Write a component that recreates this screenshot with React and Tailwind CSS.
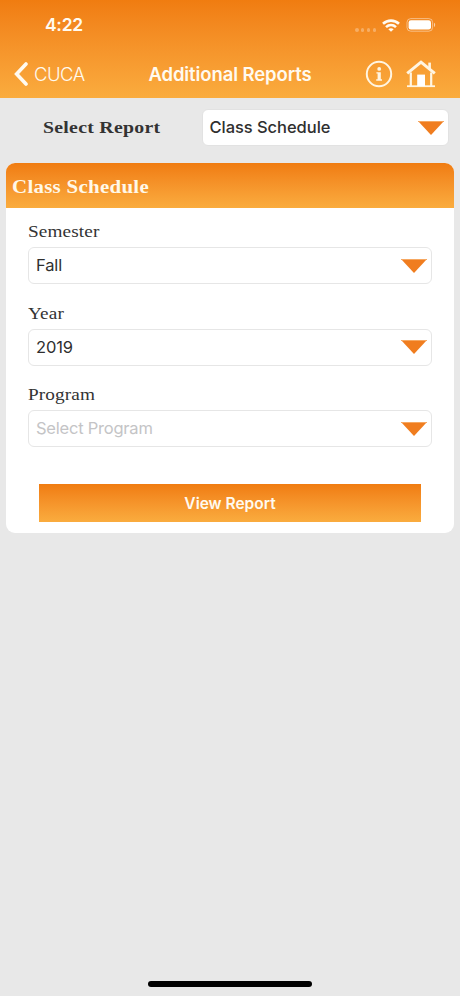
import { useState } from "react";

const fields = [
  { name: "semester", label: "Semester", value: "Fall" },
  { name: "year", label: "Year", value: "2019" },
  { name: "program", label: "Program", value: "", placeholder: "Select Program" },
];

function Caret() {
  return (
    <svg width="26" height="14" viewBox="0 0 26 14" className="shrink-0">
      <path d="M0 0H26L13 14Z" fill="#f07d1f" />
      <path d="M0 .5H26" stroke="#f6a862" />
    </svg>
  );
}

function StatusBar() {
  return (
    <div className="flex h-[50px] items-center justify-between pl-[45px] pr-[24px]">
      <span className="text-[17.5px] leading-none font-semibold tracking-[-0.3px]">4:22</span>
      <div className="flex items-center">
        <div className="mt-[10px] mr-[6px] flex gap-[2.4px]">
          {[0, 1, 2, 3].map((n) => (
            <span key={n} className="size-[3.4px] rounded-full bg-white/30" />
          ))}
        </div>
        <svg width="18" height="13" viewBox="0 0 18 13" fill="none" stroke="#fffaf0" strokeWidth="2.6">
          <path d="M1 4.8C5.4.6 12.6.6 17 4.8" />
          <path d="M4 8.1C6.9 5.5 11.1 5.5 14 8.1" />
          <path d="M9 12.8L6.3 10.2C7.9 8.9 10.1 8.9 11.7 10.2Z" fill="#fffaf0" stroke="none" />
        </svg>
        <svg width="30" height="14" viewBox="0 0 30 14" className="ml-[6px]">
          <rect x="1" y=".6" width="25.6" height="12.6" rx="3.8" fill="none" stroke="#fff" strokeOpacity=".45" />
          <rect x="2.6" y="2.2" width="22.4" height="9.4" rx="2.4" fill="#fff" />
          <path d="M28 4.8C29.6 5.4 29.6 8.4 28 9Z" fill="#fff" fillOpacity=".6" />
        </svg>
      </div>
    </div>
  );
}

function NavBar() {
  return (
    <div className="grid h-12 grid-cols-[1fr_auto_1fr] items-center px-[14px]">
      <button className="flex items-center gap-[6px]">
        <svg width="14" height="24" viewBox="0 0 14 24" fill="none" stroke="#fffaf0" strokeWidth="3.6" strokeLinecap="round">
          <path d="M12 2L2.6 12L12 22" strokeLinejoin="miter" />
        </svg>
        <span className="text-[18.5px] leading-none font-light tracking-[-0.5px]">CUCA</span>
      </button>
      <h1 className="text-[18.5px] leading-none font-semibold tracking-[-0.1px]">Additional Reports</h1>
      <div className="mr-[10px] flex items-center justify-end gap-[13px]">
        <svg width="28" height="28" viewBox="0 0 28 28" fill="none" stroke="#fff5e2">
          <circle cx="14" cy="14" r="12.2" strokeWidth="2" />
          <circle cx="14.2" cy="8.9" r="1.9" fill="#fff5e2" stroke="none" />
          <path d="M11.4 12.2H15.8V19.2H17V20.8H11.2V19.2H12.6V13.6H11.4Z" fill="#fff5e2" stroke="none" />
        </svg>
        <svg width="30" height="28" viewBox="0 0 30 28" fill="none" stroke="#fff5e2">
          <path d="M1.2 13.4L15 2.2L28.8 13.4" strokeWidth="3" />
          <path d="M23.6 2.6V9.4" strokeWidth="2.6" />
          <path d="M4.8 12.6V26M25.2 12.6V26" strokeWidth="2.2" />
          <path d="M1 26.2H29" strokeWidth="1.8" />
          <path d="M11.2 14.6H19V26H11.2Z" fill="#fff" stroke="none" />
        </svg>
      </div>
    </div>
  );
}

function SelectField({ label, value, placeholder }) {
  return (
    <div>
      <label className="block h-5 origin-left scale-x-[1.1] font-['Liberation_Serif',serif] text-[17.5px] leading-5 tracking-[0.1px] text-[#333]">
        {label}
      </label>
      <button className="mt-[6px] flex h-[37px] w-full items-center justify-between rounded-[6px] border border-[#e6e6e6] bg-white pr-1 pl-[7px] text-[16.5px]">
        {value ? (
          <span className="tracking-[-0.15px] text-[#2f2f2f]">{value}</span>
        ) : (
          <span className="tracking-[-0.22px] text-[#c4c4c6]">{placeholder}</span>
        )}
        <Caret />
      </button>
    </div>
  );
}

function App() {
  const [report] = useState("Class Schedule");

  return (
    <div className="flex h-[996px] w-[460px] flex-col bg-[#e8e8e8] font-['Inter',sans-serif]">
      <header className="h-[98px] shrink-0 bg-linear-to-b from-[#f07c10] to-[#faac3e] text-[#fffaf0]">
        <StatusBar />
        <NavBar />
      </header>

      {/* Report picker */}
      <div className="mt-[11px] flex h-[37px] items-center pr-[11px] pl-[43px]">
        <div className="w-[158.5px] shrink-0 pb-[2px]">
          <span className="inline-block origin-left scale-x-[1.13] font-['Liberation_Serif',serif] text-[17.5px] leading-none font-bold tracking-[0.25px] whitespace-nowrap text-[#333]">
            Select Report
          </span>
        </div>
        <button className="flex h-[37px] flex-1 items-center justify-between rounded-[6px] border border-[#e2e2e2] bg-white pr-1 pl-[7px] text-[16.5px] font-medium tracking-[-0.05px] text-[#2f2f2f]">
          {report}
          <Caret />
        </button>
      </div>

      {/* Report options */}
      <section className="mx-[6px] mt-[17px] h-[370px] overflow-hidden rounded-[9px] bg-white">
        <h2 className="flex h-[45px] items-center bg-linear-to-b from-[#f07c10] to-[#faac3e] pt-[3px] pl-[6px] font-['Liberation_Serif',serif] text-[18.5px] leading-none font-bold tracking-[0.25px] text-[#fff8e8]">
          <span className="inline-block origin-left scale-x-[1.13]">{report}</span>
        </h2>
        <div className="flex flex-col gap-[18.5px] px-[22px] pt-[13px]">
          {fields.map((f) => (
            <SelectField key={f.name} label={f.label} value={f.value} placeholder={f.placeholder} />
          ))}
        </div>
        <button className="mx-[33px] mt-[37px] block h-[38px] w-[382px] bg-linear-to-b from-[#f07c10] to-[#faac3e] pt-px text-[15.5px] font-semibold text-[#fffaf0]">
          View Report
        </button>
      </section>

      <div className="mx-auto mt-auto mb-[9px] h-[6px] w-[164px] rounded-full bg-black" />
    </div>
  );
}

export default App;
